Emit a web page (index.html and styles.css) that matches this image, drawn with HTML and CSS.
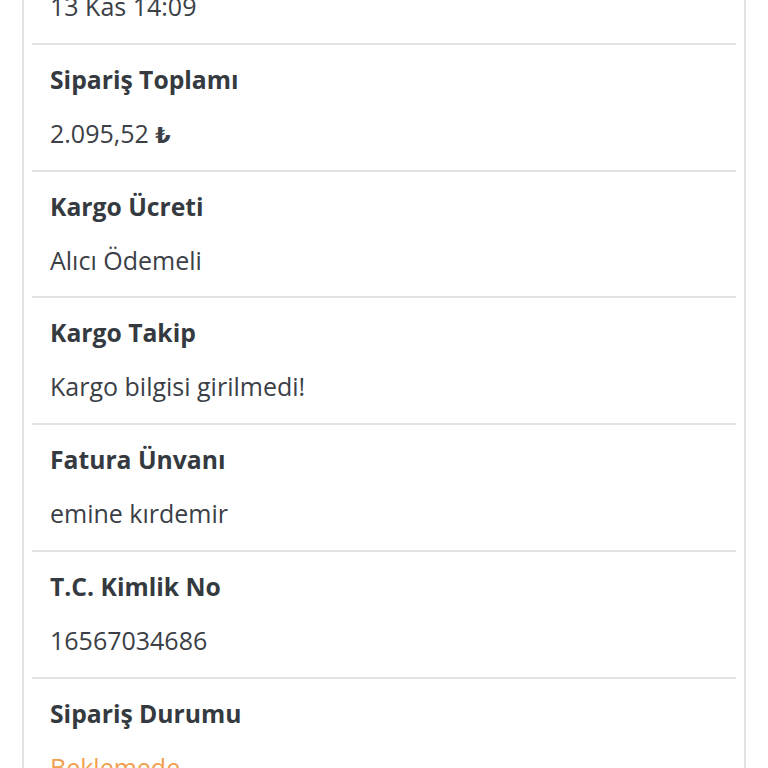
FILE: index.html
```html
<!DOCTYPE html>
<html lang="tr">
<head>
    <meta charset="UTF-8">
    <meta name="viewport" content="width=device-width, initial-scale=1.0">
    <title>Sipariş Detayı</title>
    <link rel="stylesheet" href="styles.css">
</head>
<body>
    <div class="page">
        <div class="order-card">
            <div class="order-row">
                <h3 class="order-label">Sipariş Tarihi</h3>
                <p class="order-value">13 Kas 14:09</p>
            </div>
            <div class="order-row">
                <h3 class="order-label">Sipariş Toplamı</h3>
                <p class="order-value">2.095,52 <span class="currency">₺</span></p>
            </div>
            <div class="order-row">
                <h3 class="order-label">Kargo Ücreti</h3>
                <p class="order-value">Alıcı Ödemeli</p>
            </div>
            <div class="order-row">
                <h3 class="order-label">Kargo Takip</h3>
                <p class="order-value">Kargo bilgisi girilmedi!</p>
            </div>
            <div class="order-row">
                <h3 class="order-label">Fatura Ünvanı</h3>
                <p class="order-value">emine kırdemir</p>
            </div>
            <div class="order-row">
                <h3 class="order-label">T.C. Kimlik No</h3>
                <p class="order-value">16567034686</p>
            </div>
            <div class="order-row">
                <h3 class="order-label">Sipariş Durumu</h3>
                <p class="order-value status-pending">Beklemede</p>
            </div>
        </div>
    </div>
</body>
</html>
```

FILE: styles.css
```css
* {
    margin: 0;
    padding: 0;
    box-sizing: border-box;
}

body {
    font-family: 'Open Sans', 'Noto Sans', sans-serif;
    background: #ffffff;
    color: #343a40;
    overflow: hidden;
}

.page {
    padding: 0 22px;
    margin-top: -84px;
}

.order-card {
    background: #ffffff;
    border: 2px solid #e3e3e3;
    padding: 0 8px;
}

.order-row {
    padding: 20px 18px 21.8px;
    border-bottom: 2px solid #e2e2e2;
}

.order-label {
    font-size: 24.7px;
    font-weight: 700;
    line-height: 30px;
    margin-bottom: 23px;
    color: #343a40;
}

.order-value {
    font-size: 25px;
    font-weight: 400;
    line-height: 30px;
    height: 30px;
    color: #3b4046;
}

.currency {
    font-family: 'DejaVu Sans', sans-serif;
    font-weight: 700;
    font-size: 22px;
    line-height: 1;
}

.status-pending {
    color: #f0a04e;
}
```
